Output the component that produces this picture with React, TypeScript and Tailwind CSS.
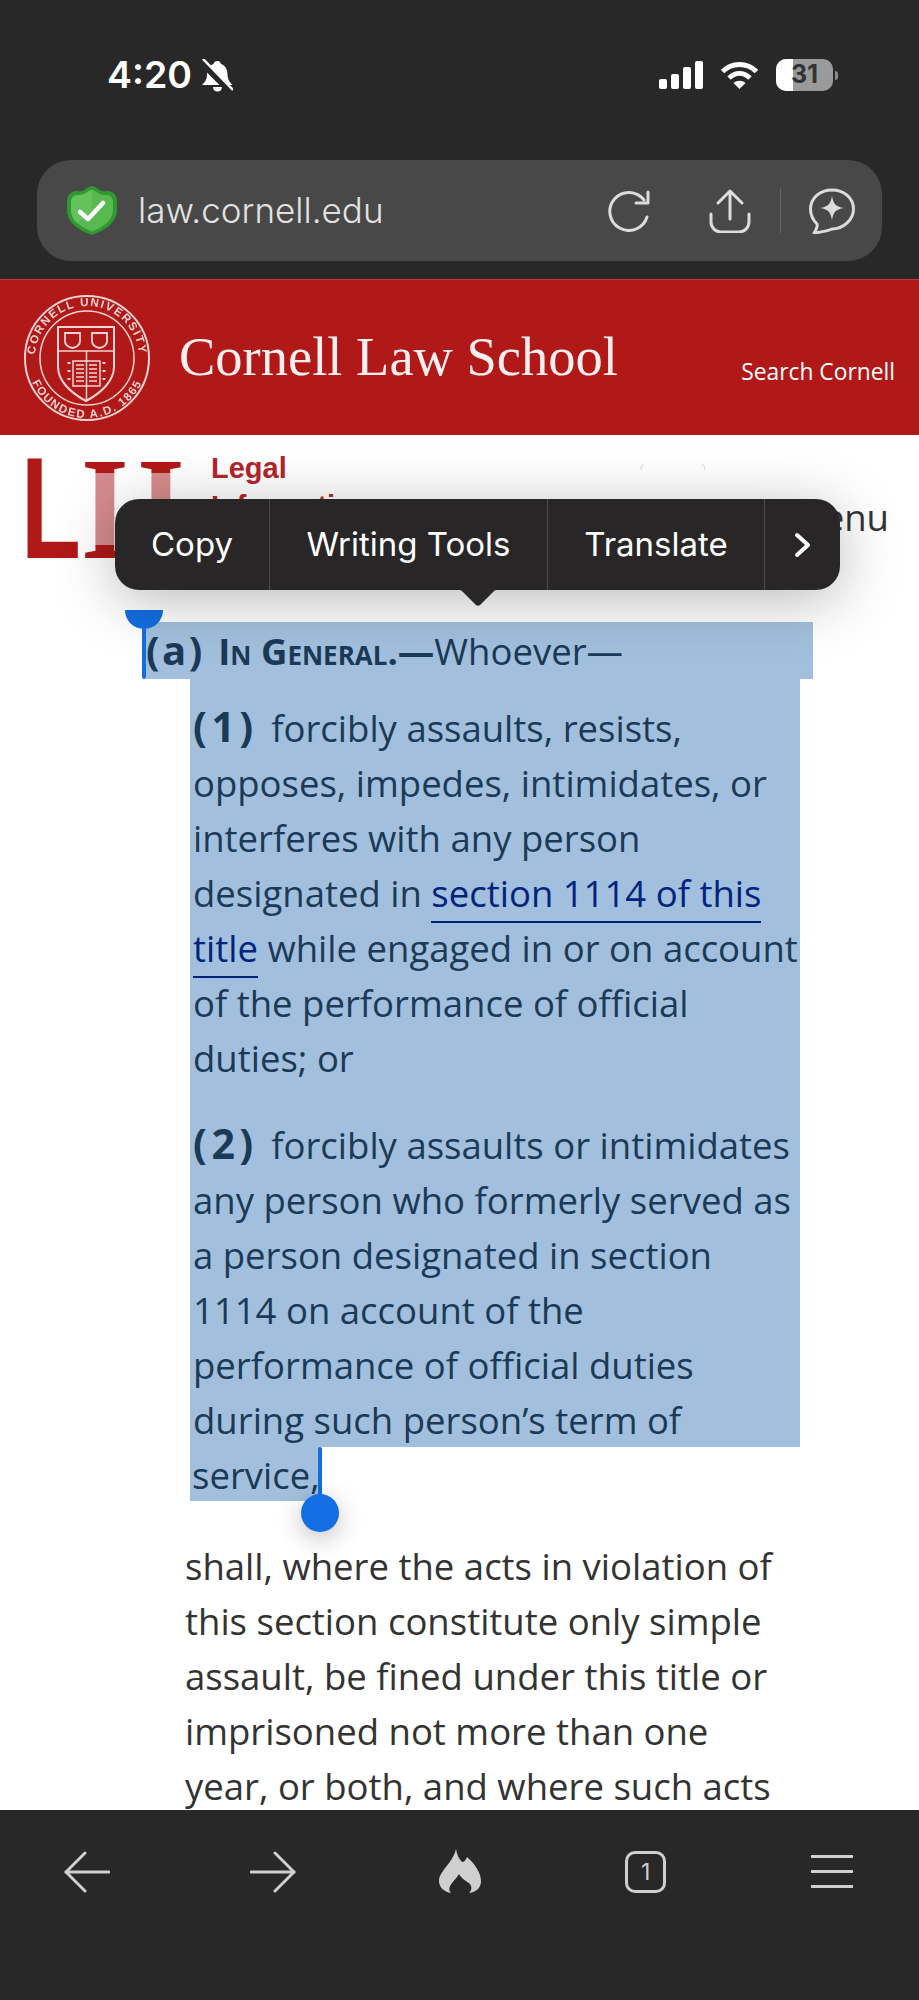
const SELECTED_ONE = [
  "opposes, impedes, intimidates, or",
  "interferes with any person",
];
const SELECTED_ONE_END = ["of the performance of official", "duties; or"];
const SELECTED_TWO = [
  "any person who formerly served as",
  "a person designated in section",
  "1114 on account of the",
  "performance of official duties",
  "during such person’s term of",
];
const PLAIN_LINES = [
  "shall, where the acts in violation of",
  "this section constitute only simple",
  "assault, be fined under this title or",
  "imprisoned not more than one",
  "year, or both, and where such acts",
];
const MENU_ITEMS = [
  { label: "Copy", width: "w-[155px]" },
  { label: "Writing Tools", width: "w-[278px]" },
  { label: "Translate", width: "w-[217px]" },
];

const StatusIcons = () => (
  <div className="flex items-center gap-[17px]">
    <svg width="44" height="28" viewBox="0 0 44 28" fill="white">
      <rect x="0" y="18" width="8" height="10" rx="2" />
      <rect x="12" y="13" width="8" height="15" rx="2" />
      <rect x="24" y="6" width="8" height="22" rx="2" />
      <rect x="36" y="0" width="8" height="28" rx="2" />
    </svg>
    <svg width="39" height="29" viewBox="0 0 39 29" fill="none" stroke="white" strokeWidth="5">
      <path d="M2.5 10.5C12 1 27 1 36.5 10.5" />
      <path d="M9 17c6.500-6 14.500-6 21 0" />
      <path d="M19.500 28l-6-6c3.500-3 8.500-3 12 0z" fill="white" stroke="none" />
    </svg>
    <div className="flex items-center gap-[2px]">
      <div className="relative flex h-[32px] w-[57px] items-center justify-center overflow-hidden rounded-[10px] bg-[#9a9a9a]">
        <div className="absolute inset-y-0 left-0 w-[17px] bg-white" />
        <span className="relative font-['Inter',sans-serif] text-[25px] font-bold text-[#333]">31</span>
      </div>
      <div className="h-[9px] w-[3px] rounded-r-full bg-[#8a8a8a]" />
    </div>
  </div>
);

const SilentBell = () => (
  <svg width="31" height="33" viewBox="0 0 31 33" className="ml-[10px]">
    <path d="M15.500 2c2 0 3 1 3.500 3 5 2 6.500 6 6.500 11 0 4 2 7 5 10H0c3-3 5-6 5-10 0-5 1.500-9 6.500-11 .5-2 2-3 4-3z" fill="white" />
    <path d="M11 28h9c0 3-2 4.500-4.500 4.500S11 31 11 28z" fill="white" />
    <path d="M-1 3l29 29" stroke="#282828" strokeWidth="6.500" />
    <path d="M1 0l30 31" stroke="white" strokeWidth="2.500" />
  </svg>
);

const Shield = () => (
  <svg width="50" height="49" viewBox="0 0 50 49">
    <path d="M25 0c4 0 6 4 10 5 4 1 7-1 10 1 3 2 5 5 5 9v9c0 12-11 20-25 25C11 44 0 36 0 24v-9c0-4 2-7 5-9 3-2 6 0 10-1 4-1 6-5 10-5z" fill="#2f982e" />
    <path d="M25 4c3 0 5 3 9 4.500 4 1 7 0 9 1.500 2 1.500 3 3.500 3 6v8c0 10-9 17-21 21.500C13 41 4 34 4 24v-8c0-2.500 1-4.500 3-6 2-1.500 5-.5 9-1.500C20 7 22 4 25 4z" fill="#58b950" />
    <path d="M25 4c-3 0-5 3-9 4.500-4 1-7 0-9 1.500-2 1.500-3 3.500-3 6v8c0 5 2 9 6 13l15-12z" fill="#64c15c" />
    <path d="M13 26l8 7 15-16" stroke="white" strokeWidth="4.500" fill="none" strokeLinecap="round" strokeLinejoin="round" />
  </svg>
);

const ReloadIcon = () => (
  <svg width="43" height="42" viewBox="0 0 43 42" fill="none" stroke="#dcdcdc" strokeWidth="3" strokeLinecap="round" strokeLinejoin="round">
    <path d="M37 10A19 19 0 1 0 40 27" />
    <path d="M41 2v11H29" />
  </svg>
);

const ShareIcon = () => (
  <svg width="42" height="44" viewBox="0 0 42 44" fill="none" stroke="#dcdcdc" strokeWidth="3" strokeLinecap="round" strokeLinejoin="round">
    <path d="M21 30V2M9 14L21 2l12 12" />
    <path d="M2 25v8a10 10 0 0 0 10 10h18a10 10 0 0 0 10-10v-8" />
  </svg>
);

const ChatSpark = () => (
  <svg width="46" height="46" viewBox="0 0 46 46" fill="none">
    <path d="M23 2c12 0 21.500 8 21.500 19S34 41 23 41c-4 2-10 3-18 4 2-3 4-6 3-9-4-4-6.500-9-6.500-15C1.500 10 11 2 23 2z" stroke="#dcdcdc" strokeWidth="3" strokeLinejoin="round" />
    <path d="M23 8c1.500 8 3.500 10.500 12 12-8.500 1.500-10.500 4-12 12-1.500-8-3.500-10.500-12-12 8.500-1.500 10.500-4 12-12z" fill="#dcdcdc" />
  </svg>
);

const Seal = () => (
  <svg width="128" height="128" viewBox="0 0 128 128" className="blur-[0.7px]" fill="none" stroke="#f3d4d3">
    <defs>
      <path id="sealTop" d="M12 64a52 52 0 0 1 104 0" />
      <path id="sealBottom" d="M4 64a60 60 0 0 0 120 0" />
    </defs>
    <circle cx="64" cy="64" r="62" strokeWidth="2" />
    <circle cx="64" cy="64" r="47" strokeWidth="1.500" />
    <text fontFamily="Liberation Sans, sans-serif" fontSize="11.500" fontWeight="700" fill="#f3d4d3" stroke="none" letterSpacing="1.600">
      <textPath href="#sealTop" startOffset="50%" textAnchor="middle">CORNELL UNIVERSITY</textPath>
    </text>
    <text fontFamily="Liberation Sans, sans-serif" fontSize="11.500" fontWeight="700" fill="#f3d4d3" stroke="none" letterSpacing="1.600">
      <textPath href="#sealBottom" startOffset="50%" textAnchor="middle">FOUNDED A.D. 1865</textPath>
    </text>
    <path d="M35 33h56v40c0 14-13 26-28 34-15-8-28-20-28-34z" strokeWidth="2" />
    <path d="M35 57h56M63.500 57v50" strokeWidth="1.500" />
    <path d="M42 39h15v8c0 4-3 6-7.500 7-4.500-1-7.500-3-7.500-7zM69 39h15v8c0 4-3 6-7.500 7-4.500-1-7.500-3-7.500-7z" strokeWidth="1.800" />
    <path d="M50 67h27v25H50z" strokeWidth="1.500" />
    <path d="M53 71h8M53 75h8M53 79h8M53 83h8M53 87h8M66 71h8M66 75h8M66 79h8M66 83h8M66 87h8" strokeWidth="1.600" />
    <path d="M46 68v2M46 76v2M46 84v2M81 68v2M81 76v2M81 84v2" strokeWidth="3" />
  </svg>
);

const LiiLogo = () => (
  <div className="flex items-start">
    <div className="flex h-[100px] w-[190px] font-bold text-[#b01917]">
      <span className="-mr-[28px] block h-[100px] origin-left scale-x-[0.68] font-['Liberation_Sans',sans-serif] text-[144px] leading-[100px]">L</span>
      <span className="-mr-[1px] block h-[100px] origin-left scale-x-[0.84] bg-[linear-gradient(#b01917_14%,#d68b8c_14%,#d68b8c_86%,#b01917_86%)] bg-clip-text font-['Liberation_Serif',serif] text-[146px] leading-[100px] text-transparent">I</span>
      <span className="block h-[100px] origin-left scale-x-[0.84] bg-[linear-gradient(#b01917_14%,#d68b8c_14%,#d68b8c_86%,#b01917_86%)] bg-clip-text font-['Liberation_Serif',serif] text-[146px] leading-[100px] text-transparent">I</span>
    </div>
    <div className="-mt-[10px] font-['Liberation_Sans',sans-serif] text-[29px] leading-[38px] font-bold text-[#b5242a]">
      <div>Legal</div>
      <div>Information</div>
    </div>
  </div>
);

const TextLine = ({ children }: { children: React.ReactNode }) => (
  <div className="h-[55px] whitespace-nowrap pl-[3px]">{children}</div>
);

const Mark = ({ children }: { children: string }) => (
  <span className="mr-[4px] text-[41px] leading-none font-bold tracking-[4.500px]">{children}</span>
);

const SelectionMenu = () => (
  <div className="absolute left-[115px] top-[499px] z-20 rounded-[24px] shadow-[0_10px_60px_rgba(0,0,0,0.28)]">
    <div className="flex h-[91px] w-[725px] items-stretch overflow-hidden rounded-[24px] bg-[#282626] font-['Inter',sans-serif] text-[33px] text-white">
      {MENU_ITEMS.map((item) => (
        <div key={item.label} className={`${item.width} flex items-center justify-center border-r border-[#4b4a4a]`}>
          {item.label}
        </div>
      ))}
      <div className="flex flex-1 items-center justify-center">
        <svg width="18" height="26" viewBox="0 0 18 26" fill="none" stroke="white" strokeWidth="4" strokeLinecap="round" strokeLinejoin="round">
          <path d="M3 3l11 10L3 23" />
        </svg>
      </div>
    </div>
    <svg width="46" height="18" viewBox="0 0 46 18" className="absolute left-[340px] top-[90px]" fill="#282626">
      <path d="M0 0h46c-4 0-6 1-8 3L25 16c-1 1-3 1-4 0L8 3C6 1 4 0 0 0z" />
    </svg>
  </div>
);

const NavArrow = ({ flip }: { flip?: boolean }) => (
  <svg width="46" height="42" viewBox="0 0 46 42" fill="none" stroke="#cfcfcf" strokeWidth="3" strokeLinecap="round" strokeLinejoin="round" className={flip ? "-scale-x-100" : ""}>
    <path d="M21 2L2 21l19 19" />
    <path d="M2 21h43" />
  </svg>
);

const BottomBar = () => (
  <div className="flex h-[190px] shrink-0 items-start justify-between bg-[#282828] px-[64px] pt-[41px] text-[#cfcfcf]">
    <NavArrow />
    <NavArrow flip />
    <div className="-mt-[2px] flex w-[46px] justify-center">
      <svg width="42" height="44" viewBox="0 0 42 44" fill="currentColor">
        <path d="M17 0c1 6 3 10 6 13 2 0 4-2 5-5 8 7 14 16 14 24 0 6-4 11-12 12 3-3 3-6 1-9-4-3-9-6-11-10-2 4-7 8-9 12-1 3-1 5 1 7C5 43 0 38 0 32 0 22 14 14 17 0z" />
      </svg>
    </div>
    <div className="flex w-[46px] justify-center">
      <div className="flex h-[42px] w-[41px] items-center justify-center rounded-[10px] border-[3px] border-[#cfcfcf] font-['Inter',sans-serif] text-[23px]">
        1
      </div>
    </div>
    <div className="mt-[4px] flex w-[46px] flex-col items-center gap-[12px]">
      <div className="h-[3px] w-[42px] bg-[#cfcfcf]" />
      <div className="h-[3px] w-[42px] bg-[#cfcfcf]" />
      <div className="h-[3px] w-[42px] bg-[#cfcfcf]" />
    </div>
  </div>
);

export default function App() {
  return (
    <div className="relative flex h-[2000px] w-[919px] flex-col overflow-hidden bg-white">
      {/* Browser chrome */}
      <header className="h-[279px] shrink-0 bg-[#282828] px-[37px] pt-[57px]">
        <div className="flex h-[36px] items-center justify-between pl-[70px] pr-[44px]">
          <div className="flex items-center font-['Inter',sans-serif] text-[37.500px] font-semibold leading-none text-white">
            4:20
            <SilentBell />
          </div>
          <StatusIcons />
        </div>
        <div className="mt-[67px] flex h-[101px] w-[845px] items-center rounded-[34px] bg-[#484848] pl-[30px] pr-[27px] text-[#e2e2e2]">
          <Shield />
          <span className="ml-[21px] flex-1 font-['Inter',sans-serif] text-[35px] font-light">law.cornell.edu</span>
          <ReloadIcon />
          <div className="ml-[59px]"><ShareIcon /></div>
          <div className="ml-[29px] h-[45px] w-[1px] bg-[#666]" />
          <div className="ml-[28px]"><ChatSpark /></div>
        </div>
      </header>

      {/* Cornell bar */}
      <div className="flex h-[156px] shrink-0 items-center border-t border-[#c03a38] bg-[#b01917] pl-[23px] pr-[24px]">
        <Seal />
        <span className="ml-[28px] flex-1 font-['Liberation_Serif',serif] text-[54.500px] leading-none text-[#fbeeee] blur-[0.5px]">
          Cornell Law School
        </span>
        <span className="mt-[30px] font-['Open_Sans',sans-serif] text-[22.800px] text-white">Search Cornell</span>
      </div>

      {/* Page */}
      <main className="min-h-0 flex-1 overflow-hidden font-['Open_Sans',sans-serif] text-[36.500px] text-[#333]">
        <div className="flex h-[187px] items-start justify-between pl-[21px] pr-[30px] pt-[24px]">
          <LiiLogo />
          <span className="pt-[35px] leading-[46px]">Menu</span>
        </div>

        <div className="ml-[146px] h-[57px] w-[667px] whitespace-nowrap bg-[#a2c0dd] leading-[59px] text-[#1b3a58]">
          <span className="text-[40px] leading-none font-bold tracking-[2.500px]">(a)</span>{" "}
          <span className="ml-[4px] font-bold [font-variant:small-caps]">In General.—</span>Whoever—
        </div>

        <div className="ml-[190px] w-[610px] bg-[#a2c0dd] pt-[21px] leading-[57px] text-[#1b3a58]">
          <TextLine>
            <Mark>(1)</Mark> forcibly assaults, resists,
          </TextLine>
          {SELECTED_ONE.map((line) => (
            <TextLine key={line}>{line}</TextLine>
          ))}
          <TextLine>
            designated in{" "}
            <span className="border-b-2 border-[#00247d] pb-[3px] text-[#00247d]">section 1114 of this</span>
          </TextLine>
          <TextLine>
            <span className="border-b-2 border-[#00247d] pb-[3px] text-[#00247d]">title</span> while engaged in or on account
          </TextLine>
          {SELECTED_ONE_END.map((line) => (
            <TextLine key={line}>{line}</TextLine>
          ))}
          <div className="h-[32px]" />
          <TextLine>
            <Mark>(2)</Mark> forcibly assaults or intimidates
          </TextLine>
          {SELECTED_TWO.map((line) => (
            <TextLine key={line}>{line}</TextLine>
          ))}
        </div>
        <div className="ml-[190px] h-[54px] w-[130px] bg-[#a2c0dd] pl-[2px] leading-[57px] text-[#1b3a58]">service,</div>

        <div className="ml-[182px] mt-[38px] leading-[55px]">
          {PLAIN_LINES.map((line) => (
            <TextLine key={line}>{line}</TextLine>
          ))}
        </div>
      </main>

      <BottomBar />
      <SelectionMenu />

      {/* Faint marks left of the hidden nav */}
      <svg width="66" height="8" viewBox="0 0 66 8" className="absolute left-[640px] top-[463px]" fill="none" stroke="#f3cfd4" strokeWidth="1">
        <path d="M1 7c0-3 1-5 3-6M65 7c0-3-1-5-3-6" />
      </svg>

      {/* Selection handles */}
      <div className="absolute left-[142px] top-[629px] z-10 h-[50px] w-[4px] rounded-b-full bg-[#126ee2]" />
      <div className="absolute left-[125px] top-[610px] z-10 h-[19px] w-[38px] overflow-hidden">
        <div className="-mt-[19px] h-[38px] w-[38px] rounded-full bg-[#126ee2]" />
      </div>
      <div className="absolute left-[318px] top-[1447px] z-10 h-[50px] w-[4px] rounded-t-full bg-[#126ee2]" />
      <div className="absolute left-[301px] top-[1494px] z-10 h-[38px] w-[38px] rounded-full bg-[#126ee2] shadow-[0_6px_24px_rgba(0,0,0,0.25)]" />
    </div>
  );
}
